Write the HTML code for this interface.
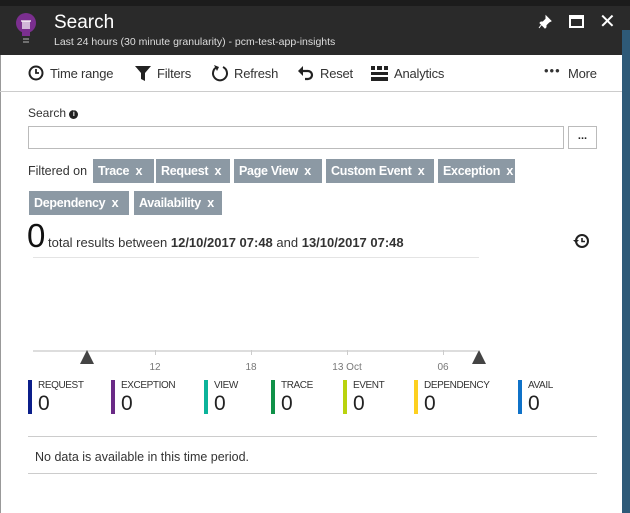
<!DOCTYPE html>
<html><head><style>
*{margin:0;padding:0;box-sizing:border-box}
body{width:630px;height:513px;overflow:hidden;background:#fff;font-family:"Liberation Sans",sans-serif;position:relative;color:#222}
.a{position:absolute}
.tag{position:absolute;height:24px;background:#8c99a4;color:#fff;font-weight:bold;font-size:12.5px;letter-spacing:-0.3px;line-height:24px;padding-left:5px;white-space:nowrap;overflow:hidden}
.tb{position:absolute;top:66px;font-size:13px;letter-spacing:-0.2px;color:#333}
.lg{position:absolute;top:380px;height:34px;border-left:4px solid}
.lg span{position:absolute;left:6px;top:0;font-size:10px;letter-spacing:-0.4px;color:#333;white-space:nowrap}
.lg b{position:absolute;left:6px;top:12px;font-size:21px;font-weight:normal;color:#222}
.tk{position:absolute;top:362px;font-size:10px;color:#777;transform:translateX(-50%);white-space:nowrap}
.tick{position:absolute;top:350px;width:1px;height:5px;background:#ccc}
</style></head><body>
<div class="a" style="left:0;top:0;width:630px;height:6px;background:#1c1c1c"></div>
<div class="a" style="left:0;top:6px;width:630px;height:49px;background:#2a2a2a"></div>
<div class="a" style="left:622px;top:30px;width:8px;height:483px;background:#2e5a78"></div>
<div class="a" style="left:0;top:55px;width:1px;height:458px;background:#999"></div>
<svg class="a" style="left:14px;top:12px" width="24" height="36" viewBox="0 0 24 36"><circle cx="12" cy="11" r="10" fill="#7b2f8f"/><path d="M8 20h8v4h-8z" fill="#7b2f8f"/><path d="M7 9h10M9 9v8M15 9v8M11 9v8M13 9v8" stroke="#fff" stroke-width="1.3"/><path d="M9 27h6M9 30h6" stroke="#888" stroke-width="1.5"/></svg>
<div class="a" style="left:54px;top:12px;font-size:19px;color:#fff">Search</div>
<div class="a" style="left:54px;top:36px;font-size:10.5px;color:#ddd">Last 24 hours (30 minute granularity) - pcm-test-app-insights</div>
<svg class="a" style="left:537px;top:14px" width="16" height="16" viewBox="0 0 16 16"><path d="M9 2l5 5-2 1-3 3 0 2-1 1-5-5 1-1h2l3-3z M5 10l-3 4" fill="#fff" stroke="#fff" stroke-width="1"/></svg>
<div class="a" style="left:569px;top:15px;width:15px;height:13px;border:2px solid #fff;border-top-width:4px"></div>
<div class="a" style="left:599px;top:9px;font-size:20px;color:#fff">✕</div>
<div class="a" style="left:0;top:91px;width:622px;height:1px;background:#ccc"></div>
<svg class="a" style="left:28px;top:65px" width="16" height="16"><circle cx="8" cy="8" r="6.5" fill="none" stroke="#222" stroke-width="2"/><path d="M8 4v4h3" stroke="#222" stroke-width="1.8" fill="none"/></svg>
<div class="tb" style="left:50px">Time range</div>
<svg class="a" style="left:135px;top:66px" width="16" height="15"><path d="M0 0h16l-6 7v8l-4-2v-6z" fill="#222"/></svg>
<div class="tb" style="left:157px">Filters</div>
<svg class="a" style="left:211px;top:64px" width="18" height="18"><path d="M6 3A7 7 0 1 0 12 3" fill="none" stroke="#222" stroke-width="2"/><path d="M3 1l5 2-2 4z" fill="#222"/></svg>
<div class="tb" style="left:234px">Refresh</div>
<svg class="a" style="left:297px;top:65px" width="18" height="17"><path d="M4 6h7a4 4 0 0 1 0 8H8" fill="none" stroke="#222" stroke-width="2.2"/><path d="M1 6l5-5v10z" fill="#222"/></svg>
<div class="tb" style="left:320px">Reset</div>
<svg class="a" style="left:371px;top:66px" width="17" height="15"><path d="M0 0h4v4H0zM6 0h5v4H6zM13 0h4v4h-4zM0 6h17v3H0zM0 11h17v4H0z" fill="#222"/></svg>
<div class="tb" style="left:394px">Analytics</div>
<div class="tb" style="left:544px;top:63px;letter-spacing:1px">•••</div>
<div class="tb" style="left:568px">More</div>
<div class="a" style="left:28px;top:106px;font-size:12px;color:#333">Search <span style="display:inline-block;width:9px;height:9px;border-radius:50%;background:#222;color:#fff;font-size:7px;text-align:center;line-height:9px;font-weight:bold;vertical-align:1px">i</span></div>
<div class="a" style="left:28px;top:126px;width:536px;height:23px;border:1px solid #bbb"></div>
<div class="a" style="left:568px;top:126px;width:29px;height:23px;border:1px solid #bbb;font-size:11px;text-align:center;line-height:18px;font-weight:bold">...</div>
<div class="a" style="left:28px;top:164px;font-size:12.5px;color:#333">Filtered on</div>
<div class="tag" style="left:93px;top:159px;width:61px">Trace &nbsp;x</div>
<div class="tag" style="left:156px;top:159px;width:74px">Request &nbsp;x</div>
<div class="tag" style="left:234px;top:159px;width:88px">Page View &nbsp;x</div>
<div class="tag" style="left:326px;top:159px;width:108px">Custom Event &nbsp;x</div>
<div class="tag" style="left:438px;top:159px;width:77px">Exception &nbsp;x</div>
<div class="tag" style="left:29px;top:191px;width:100px">Dependency &nbsp;x</div>
<div class="tag" style="left:134px;top:191px;width:88px">Availability &nbsp;x</div>
<div class="a" style="left:27px;top:217px;font-size:33px;color:#111">0</div>
<div class="a" style="left:48px;top:235px;font-size:13px;color:#333;white-space:nowrap">total results between <b>12/10/2017 07:48</b> and <b>13/10/2017 07:48</b></div>
<div class="a" style="left:33px;top:257px;width:446px;height:1px;background:#e4e4e4"></div>
<svg class="a" style="left:573px;top:233px" width="17" height="17"><circle cx="9" cy="8" r="6" fill="none" stroke="#222" stroke-width="2"/><path d="M9 5v3.5h3" stroke="#222" stroke-width="1.6" fill="none"/><path d="M0 7l3 3 3-3z" fill="#222"/></svg>
<div class="a" style="left:33px;top:350px;width:445px;height:2px;background:#ddd"></div>
<div class="tick" style="left:155px"></div>
<div class="tick" style="left:251px"></div>
<div class="tick" style="left:347px"></div>
<div class="tick" style="left:443px"></div>
<svg class="a" style="left:79px;top:350px" width="16" height="14"><path d="M8 0l7 14H1z" fill="#444"/></svg>
<svg class="a" style="left:471px;top:350px" width="16" height="14"><path d="M8 0l7 14H1z" fill="#444"/></svg>
<div class="tk" style="left:155px">12</div>
<div class="tk" style="left:251px">18</div>
<div class="tk" style="left:347px">13 Oct</div>
<div class="tk" style="left:443px">06</div>
<div class="lg" style="left:28px;border-color:#0b1e8a"><span>REQUEST</span><b>0</b></div>
<div class="lg" style="left:111px;border-color:#6a2a86"><span>EXCEPTION</span><b>0</b></div>
<div class="lg" style="left:204px;border-color:#0cb39a"><span>VIEW</span><b>0</b></div>
<div class="lg" style="left:271px;border-color:#0f9148"><span>TRACE</span><b>0</b></div>
<div class="lg" style="left:343px;border-color:#b9d30e"><span>EVENT</span><b>0</b></div>
<div class="lg" style="left:414px;border-color:#fdd01f"><span>DEPENDENCY</span><b>0</b></div>
<div class="lg" style="left:518px;border-color:#0f72c8"><span>AVAIL</span><b>0</b></div>
<div class="a" style="left:28px;top:436px;width:569px;height:1px;background:#ccc"></div>
<div class="a" style="left:35px;top:450px;font-size:12.5px;color:#333">No data is available in this time period.</div>
<div class="a" style="left:28px;top:473px;width:569px;height:1px;background:#ccc"></div>
</body></html>
